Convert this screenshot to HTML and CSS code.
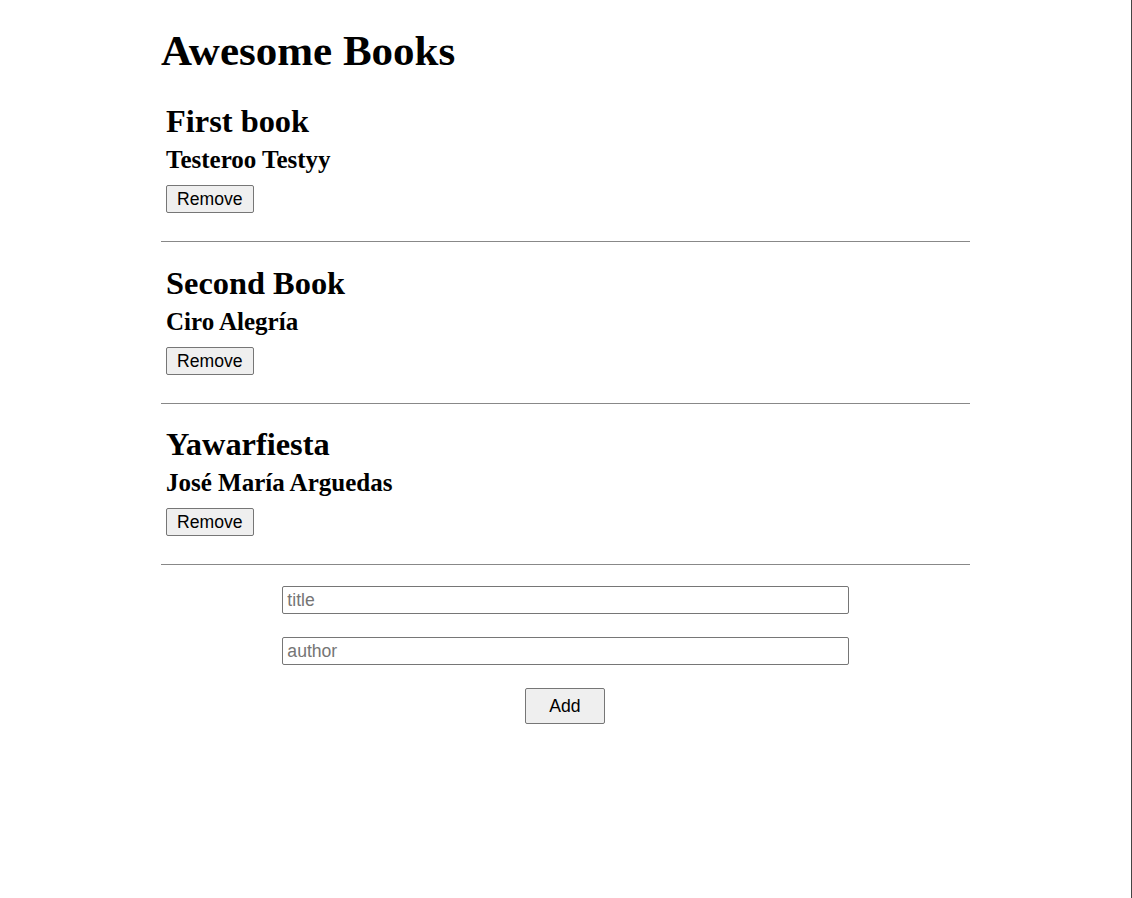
FILE: index.html
```html
<!DOCTYPE html>
<html lang="en">
<head>
<meta charset="utf-8">
<title>Awesome Books</title>
<link rel="stylesheet" href="styles.css">
</head>
<body>
<main class="page">
  <h1 class="brand">Awesome Books</h1>
  <section class="books">
    <article class="book">
      <h2 class="book-title">First book</h2>
      <h3 class="book-author">Testeroo Testyy</h3>
      <button class="btn remove" type="button">Remove</button>
    </article>
    <hr class="sep">
    <article class="book">
      <h2 class="book-title">Second Book</h2>
      <h3 class="book-author">Ciro Alegría</h3>
      <button class="btn remove" type="button">Remove</button>
    </article>
    <hr class="sep">
    <article class="book">
      <h2 class="book-title">Yawarfiesta</h2>
      <h3 class="book-author">José María Arguedas</h3>
      <button class="btn remove" type="button">Remove</button>
    </article>
    <hr class="sep">
  </section>
  <form class="add-form">
    <input class="field" type="text" placeholder="title">
    <input class="field" type="text" placeholder="author">
    <button class="btn add" type="button">Add</button>
  </form>
</main>
</body>
</html>
```

FILE: styles.css
```css
html {
  min-height: 100vh;
  box-sizing: border-box;
  border-right: 1px solid #444;
  background: #fff;
}

body {
  margin: 0;
  color: #000;
  font-family: "Liberation Serif", "Times New Roman", serif;
}

.page {
  width: 809px;
  margin: 0 auto;
  padding-top: 28px;
}

.brand {
  margin: 0 0 29px;
  font-size: 43px;
  line-height: 46px;
  font-weight: bold;
}

.books {
  display: flex;
  flex-direction: column;
}

.book {
  display: flex;
  flex-direction: column;
  align-items: flex-start;
  padding: 0 5px;
}

.book-title {
  margin: 0 0 7px;
  font-size: 32.4px;
  line-height: 36px;
  font-weight: bold;
}

.book-author {
  margin: 0 0 12px;
  font-size: 25px;
  line-height: 27px;
  font-weight: bold;
}

.btn {
  font-family: "Liberation Sans", Arial, sans-serif;
  font-size: 17.6px;
  line-height: 20px;
  color: #000;
  background: #efefef;
  border: 1px solid #767676;
  border-radius: 2px;
}

.remove {
  padding: 3px 10px;
  height: 28px;
}

.sep {
  width: 100%;
  margin: 28px 0 22.5px;
  border: 0;
  border-top: 1px solid #888;
  height: 0;
}

.books .sep:last-child {
  margin-bottom: 21px;
}

.add-form {
  display: flex;
  flex-direction: column;
  align-items: center;
  gap: 23px;
}

.field {
  box-sizing: border-box;
  width: 70%;
  height: 28px;
  margin: 0;
  padding: 3px 4px;
  font-family: "Liberation Sans", Arial, sans-serif;
  font-size: 17.6px;
  color: #000;
  border: 1px solid #767676;
  border-radius: 2px;
  background: #fff;
}

.field::placeholder {
  color: #757575;
}

.add {
  box-sizing: border-box;
  width: 80px;
  height: 36px;
  padding: 7px 0;
  margin-left: -1px;
}
```
